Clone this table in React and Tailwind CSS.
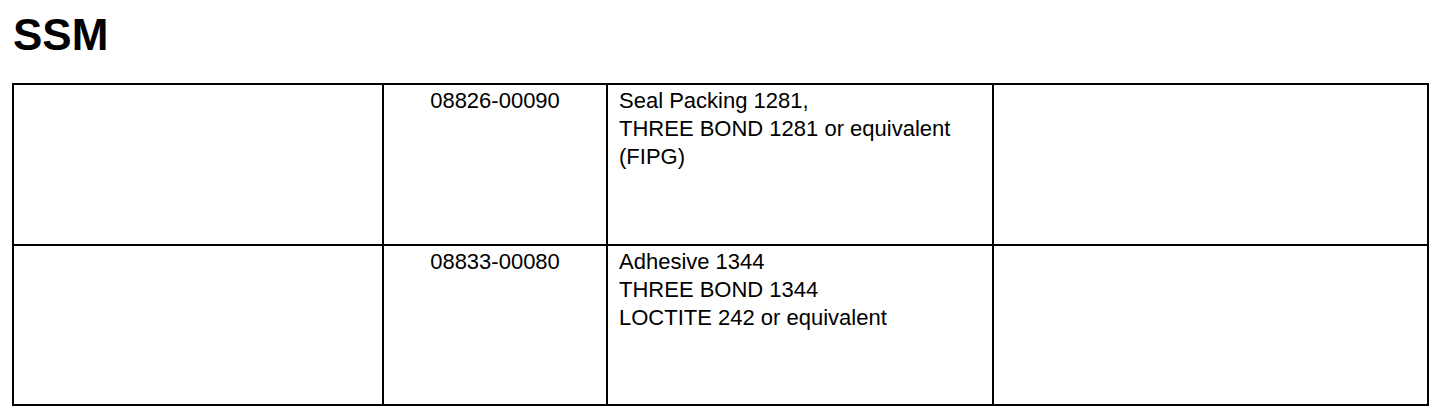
const rows = [
  {
    code: "08826-00090",
    lines: ["Seal Packing 1281,", "THREE BOND 1281 or equivalent", "(FIPG)"],
    h: "h-[161px]",
    last: false,
  },
  {
    code: "08833-00080",
    lines: ["Adhesive 1344", "THREE BOND 1344", "LOCTITE 242 or equivalent"],
    h: "h-[158px]",
    last: true,
  },
];

export default function App() {
  return (
    <div className="min-h-screen bg-white pl-[12px] pt-[10px] text-black font-['Liberation_Sans',Arial,sans-serif]">
      <h1 className="ml-[1px] text-[44px] font-bold leading-[50px]">SSM</h1>
      <div className="mt-[23px] w-[1417px] border-2 border-black">
        {rows.map((r) => (
          <div
            key={r.code}
            className={`grid grid-cols-[370px_224px_386px_1fr] ${r.h} ${
              r.last ? "" : "border-b-2 border-black"
            }`}
          >
            <div className="border-r-2 border-black" />
            <div className="border-r-2 border-black pt-[2px] text-center text-[22px] leading-[28px]">
              {r.code}
            </div>
            <div className="border-r-2 border-black pl-[11px] pt-[2px] text-[22px] leading-[28px]">
              {r.lines.map((l) => (
                <div key={l}>{l}</div>
              ))}
            </div>
            <div />
          </div>
        ))}
      </div>
    </div>
  );
}
